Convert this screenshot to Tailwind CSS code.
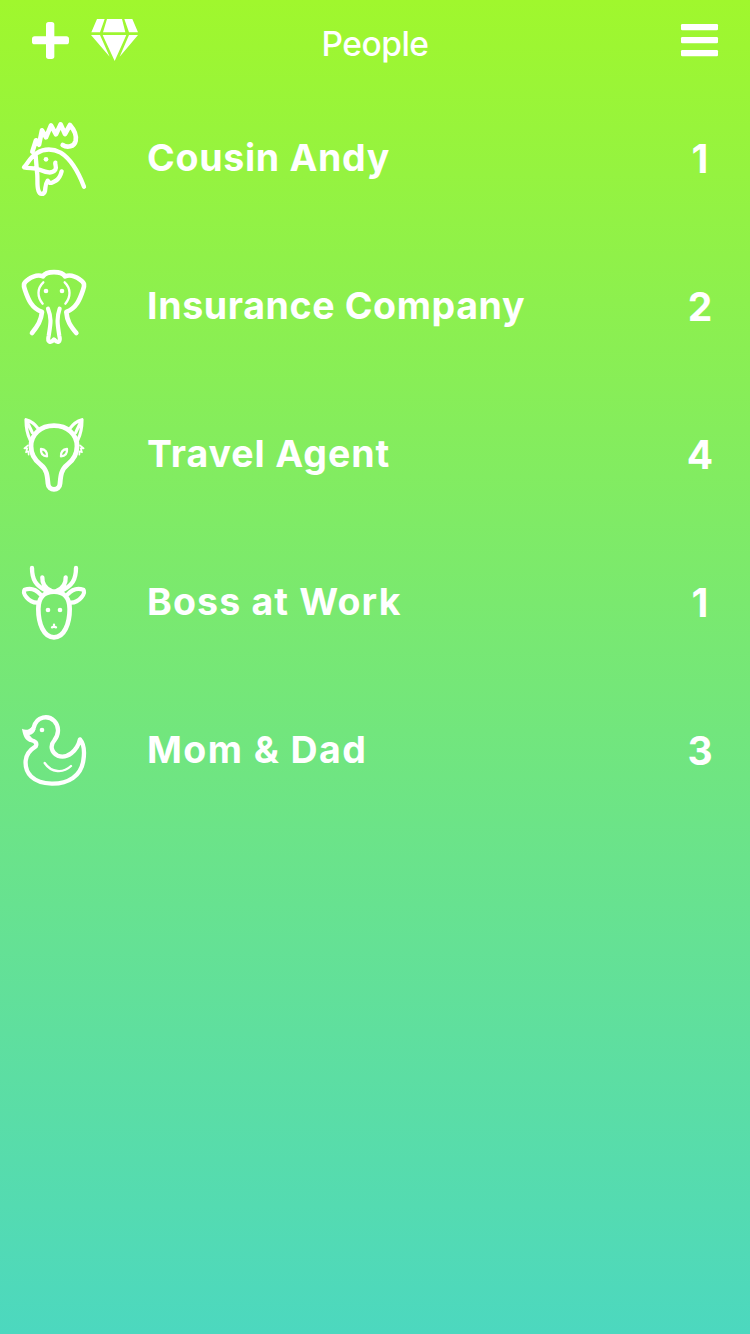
<!DOCTYPE html>
<html lang="en">
<head>
<meta charset="utf-8">
<title>People</title>
<script src="https://cdn.jsdelivr.net/npm/@tailwindcss/browser@4"></script>
</head>
<body class="h-[1334px] w-[750px] overflow-hidden bg-linear-to-b/srgb from-[#a0f72d] to-[#4cd8bf] font-['Inter',sans-serif] text-white">
<header class="grid h-[85px] grid-cols-[160px_1fr_160px] pt-[5px]">
  <svg class="ml-[10px] h-[70px] w-[150px]" viewBox="0 0 450 210" fill="currentColor">
    <rect x="108" y="51" width="25" height="111" rx="8"/><rect x="66" y="94" width="111" height="24" rx="8"/>
    <path d="M261 42H284L270 82H244ZM291 42H336L346 82H279ZM343 42H367L384 82H357ZM243 90H270L299 155ZM278 90H349L314 168ZM357 90H384L329 155Z"/>
  </svg>
  <h1 class="pt-[15px] text-center text-[33.5px] leading-[48px] font-[550] tracking-[-0.5px]">People</h1>
  <svg class="ml-[70px] h-[70px] w-[90px]" viewBox="0 0 270 210" fill="currentColor">
    <rect x="63" y="57" width="111" height="19" rx="4"/><rect x="63" y="96" width="111" height="19" rx="4"/><rect x="63" y="135" width="111" height="19" rx="4"/>
  </svg>
</header>
<main>
  <div class="flex h-[148px] items-center pl-[10px]">
    <svg class="h-[90px] w-[90px]" viewBox="0 6 270 270" fill="none" stroke="currentColor" stroke-width="14" stroke-linecap="round" stroke-linejoin="round">
      <path d="M67 119L78 85L87 98L96 55L108 76L123 40L138 67L152 37L165 66L180 39C194 55 200 70 197 86C193 105 171 108 158 99"/>
      <path d="M222 224C205 180 181 140 152 122C127 109 100 111 79 124C60 136 54 154 42 166C57 170 73 167 89 173C108 181 127 187 136 173C141 164 134 158 136 152M77 130C78 147 80 164 81 180C84 195 80 222 85 235C89 249 101 249 105 237C107 225 105 218 113 206C119 218 130 211 138 206C148 200 152 190 155 178" stroke-width="13"/>
      <circle cx="108" cy="142" r="7" fill="currentColor" stroke="none"/>
    </svg>
    <span class="ml-[47px] flex-1 pb-px text-[37.5px] font-bold tracking-[0.7px] whitespace-nowrap">Cousin Andy</span>
    <span class="w-[100px] pt-px text-center text-[39px] font-bold">1</span>
  </div>
  <div class="flex h-[148px] items-center pl-[10px]">
    <svg class="h-[90px] w-[90px]" viewBox="0 0 270 270" fill="none" stroke="currentColor" stroke-width="14" stroke-linecap="round" stroke-linejoin="round">
      <path d="M66 213C84 191 93 176 96 150C65 138 55 114 45 84C40 69 39 63 54 53C69 42 84 37 99 43C109 26 155 26 165 43C180 37 195 42 210 53C225 63 224 69 219 84C209 114 199 138 169 150C171 176 180 191 199 213"/>
      <path d="M114 140C127 172 120 193 116 222C111 240 122 246 132 232C143 246 153 240 148 222C144 193 138 172 149 140" stroke-width="12.5"/>
      <path d="M100 61C81 79 81 105 98 125M164 61C183 79 183 105 166 125" stroke-width="7"/>
      <circle cx="108" cy="87" r="7" fill="currentColor" stroke="none"/><circle cx="156" cy="87" r="7" fill="currentColor" stroke="none"/>
    </svg>
    <span class="ml-[47px] flex-1 pb-px text-[37.5px] font-bold tracking-[0.63px] whitespace-nowrap">Insurance Company</span>
    <span class="w-[100px] pt-px text-center text-[39px] font-bold">2</span>
  </div>
  <div class="flex h-[148px] items-center pl-[10px]">
    <svg class="h-[90px] w-[90px]" viewBox="0 0 270 270" fill="none" stroke="currentColor" stroke-width="14.5" stroke-linecap="round" stroke-linejoin="round">
      <path d="M132 47C92 47 63 73 63 109C63 136 75 151 91 163C111 179 112 196 114 221C115 244 149 244 150 221C152 196 153 179 173 163C189 151 201 136 201 109C201 73 172 47 132 47Z"/>
      <path d="M84 55C75 42 63 33 48 29C48 55 53 75 61 91M180 55C189 42 201 33 216 29C216 55 211 75 203 91M50 32L67 68M214 32L197 68" stroke-width="9.5"/>
      <path d="M54 106L43 115L52 115L48 127L55 124L56 134M210 106L221 115L212 115L216 127L209 124L208 134" stroke-width="5"/>
      <path d="M93 117C106 118 112 127 111 139C98 139 92 130 93 117ZM171 117C158 118 152 127 153 139C166 139 172 130 171 117Z" stroke-width="7"/>
    </svg>
    <span class="ml-[47px] flex-1 pb-px text-[37.5px] font-bold tracking-[0.9px] whitespace-nowrap">Travel Agent</span>
    <span class="w-[100px] pt-px text-center text-[39px] font-bold">4</span>
  </div>
  <div class="flex h-[148px] items-center pl-[10px]">
    <svg class="h-[90px] w-[90px]" viewBox="0 0 270 270" fill="none" stroke="currentColor" stroke-width="14" stroke-linecap="round" stroke-linejoin="round">
      <path d="M132 101C100 101 85 122 85 153C85 197 101 238 132 238C163 238 179 197 179 153C179 122 164 101 132 101Z"/>
      <path d="M66 30C66 66 78 82 108 98C117 101 120 99 123 98C107 91 96 77 97 58M198 30C198 66 186 82 156 98C147 101 144 99 141 98C157 91 168 77 167 58" stroke-width="13"/>
      <path d="M91 109C77 93 61 89 44 95C36 105 55 134 81 134M173 109C187 93 203 89 220 95C228 105 209 134 183 134" stroke-width="12.5"/>
      <circle cx="114" cy="156" r="7" fill="currentColor" stroke="none"/><circle cx="150" cy="156" r="7" fill="currentColor" stroke="none"/>
      <path d="M132 200V206L126 208M132 206L138 208" stroke-width="7"/>
    </svg>
    <span class="ml-[47px] flex-1 pb-px text-[37.5px] font-bold tracking-[1.15px] whitespace-nowrap">Boss at Work</span>
    <span class="w-[100px] pt-px text-center text-[39px] font-bold">1</span>
  </div>
  <div class="flex h-[148px] items-center pl-[10px]">
    <svg class="h-[90px] w-[90px]" viewBox="0 0 270 270" fill="none" stroke="currentColor" stroke-width="13" stroke-linecap="round" stroke-linejoin="round">
      <path d="M64 74C68 72 70 69 71 65C80 29 115 27 133 45C150 63 145 88 133 103C119 119 124 139 143 149C171 160 202 135 210 100C221 113 224 138 220 163C214 210 174 234 125 233C68 231 44 201 47 164C49 142 64 129 77 121C82 112 77 105 62 102"/>
      <path d="M36 68C46 74 58 72 66 62L77 69C74 80 66 86 58 87L68 98L58 107C48 102 40 94 36 68Z" fill="currentColor" stroke="none"/>
      <path d="M104 171C124 201 160 202 183 180" stroke-width="7"/>
      <circle cx="96" cy="72" r="7" fill="currentColor" stroke="none"/>
    </svg>
    <span class="ml-[47px] flex-1 pb-px text-[37.5px] font-bold tracking-[1.4px] whitespace-nowrap">Mom &amp; Dad</span>
    <span class="w-[100px] pt-px text-center text-[39px] font-bold">3</span>
  </div>
</main>
</body>
</html>
